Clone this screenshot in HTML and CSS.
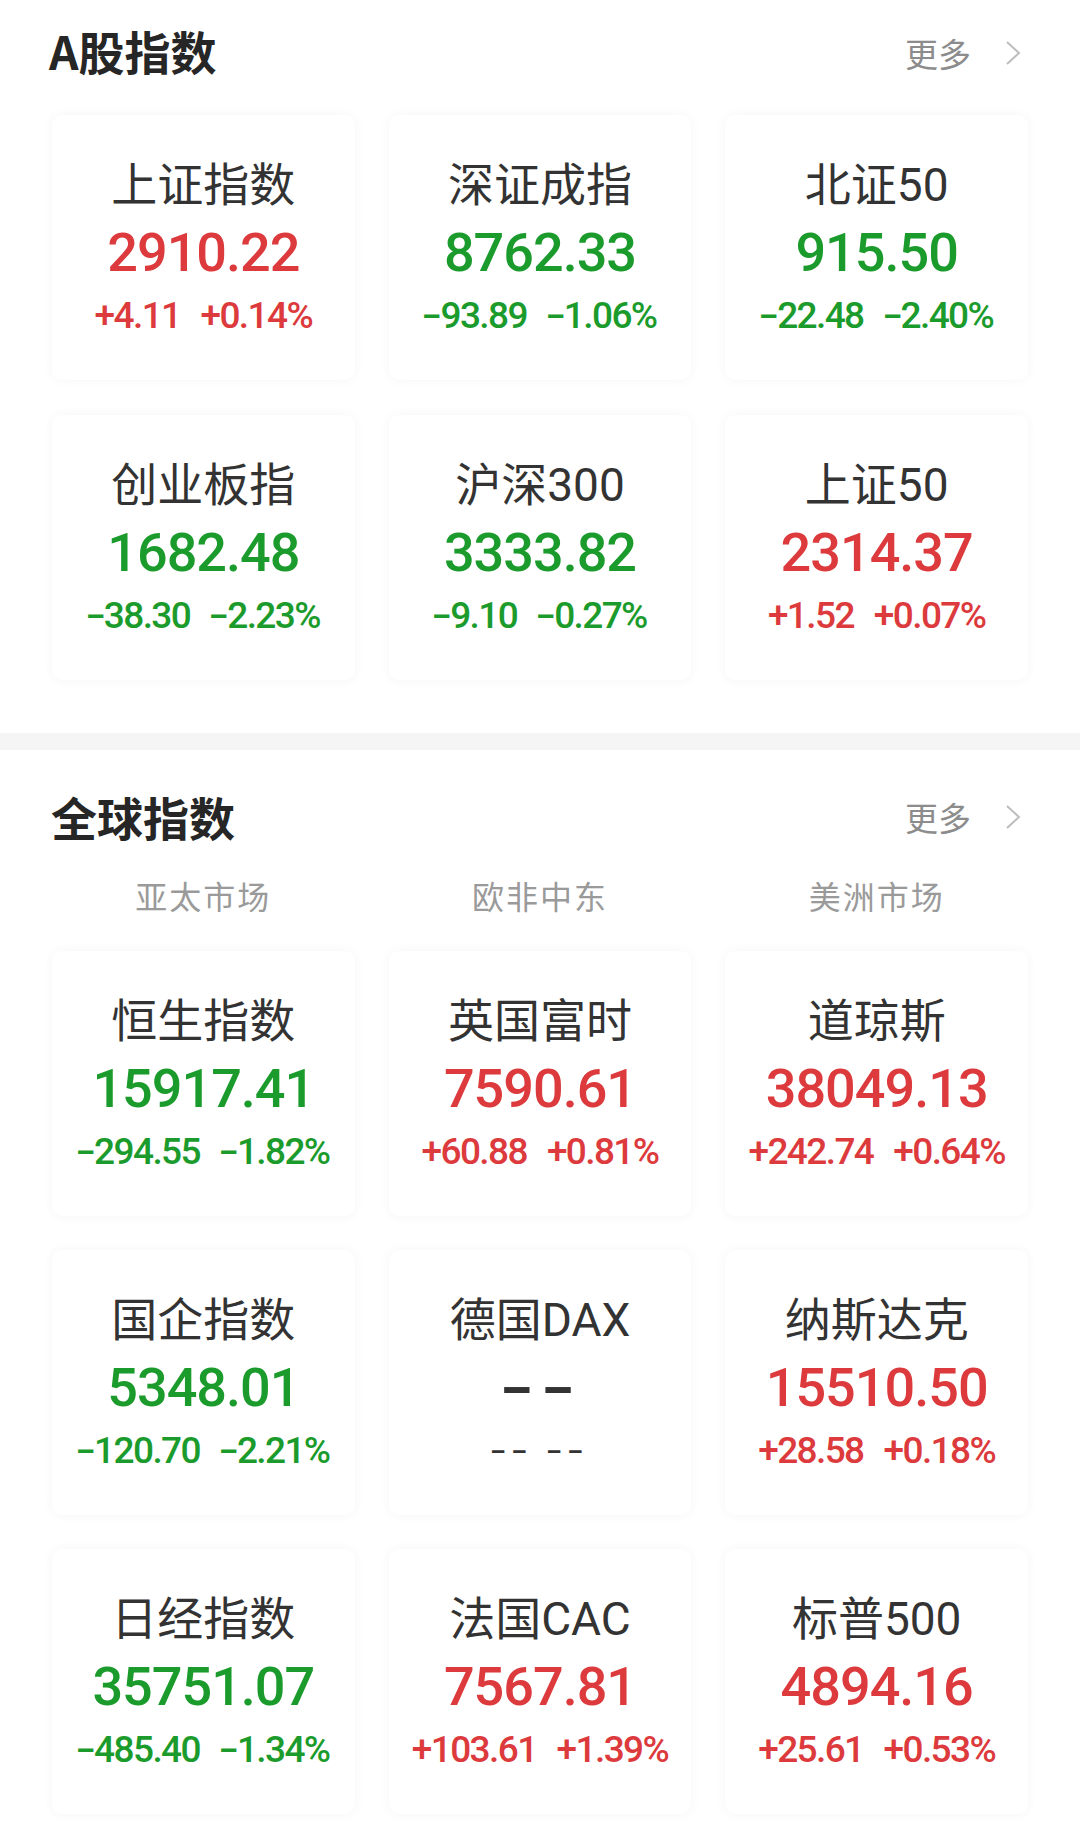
FILE: index.html
```html
<!DOCTYPE html>
<html lang="zh-CN">
<head>
<meta charset="utf-8">
<title>指数</title>
<link rel="stylesheet" href="styles.css">
</head>
<body>
<div class="page">
  <section class="sec sec-a">
    <div class="head">
      <h2 class="title">A股指数</h2>
      <div class="more"><span>更多</span><svg class="chev" viewBox="0 0 16 26" width="16" height="26"><polyline points="2,2 14,13 2,24" fill="none" stroke="#bdbdbd" stroke-width="2"/></svg></div>
    </div>
    <div class="grid grid-a">
      <div class="card"><div class="name">上证指数</div><div class="val up">2910.22</div><div class="chg up"><span>+4.11</span><span>+0.14%</span></div></div>
      <div class="card"><div class="name">深证成指</div><div class="val down">8762.33</div><div class="chg down"><span><i class="sign">-</i>93.89</span><span><i class="sign">-</i>1.06%</span></div></div>
      <div class="card"><div class="name">北证50</div><div class="val down">915.50</div><div class="chg down"><span><i class="sign">-</i>22.48</span><span><i class="sign">-</i>2.40%</span></div></div>
      <div class="card"><div class="name">创业板指</div><div class="val down">1682.48</div><div class="chg down"><span><i class="sign">-</i>38.30</span><span><i class="sign">-</i>2.23%</span></div></div>
      <div class="card"><div class="name">沪深300</div><div class="val down">3333.82</div><div class="chg down"><span><i class="sign">-</i>9.10</span><span><i class="sign">-</i>0.27%</span></div></div>
      <div class="card"><div class="name">上证50</div><div class="val up">2314.37</div><div class="chg up"><span>+1.52</span><span>+0.07%</span></div></div>
    </div>
  </section>
  <div class="band"></div>
  <section class="sec sec-g">
    <div class="head">
      <h2 class="title">全球指数</h2>
      <div class="more"><span>更多</span><svg class="chev" viewBox="0 0 16 26" width="16" height="26"><polyline points="2,2 14,13 2,24" fill="none" stroke="#bdbdbd" stroke-width="2"/></svg></div>
    </div>
    <div class="tabs">
      <span class="tab">亚太市场</span>
      <span class="tab">欧非中东</span>
      <span class="tab">美洲市场</span>
    </div>
    <div class="grid grid-g">
      <div class="card"><div class="name">恒生指数</div><div class="val down">15917.41</div><div class="chg down"><span><i class="sign">-</i>294.55</span><span><i class="sign">-</i>1.82%</span></div></div>
      <div class="card"><div class="name">英国富时</div><div class="val up">7590.61</div><div class="chg up"><span>+60.88</span><span>+0.81%</span></div></div>
      <div class="card"><div class="name">道琼斯</div><div class="val up">38049.13</div><div class="chg up"><span>+242.74</span><span>+0.64%</span></div></div>
      <div class="card"><div class="name">国企指数</div><div class="val down">5348.01</div><div class="chg down"><span><i class="sign">-</i>120.70</span><span><i class="sign">-</i>2.21%</span></div></div>
      <div class="card"><div class="name">德国DAX</div><div class="val flat"><span class="dash">--</span></div><div class="chg flat empty"><span>--</span><span>--</span></div></div>
      <div class="card"><div class="name">纳斯达克</div><div class="val up">15510.50</div><div class="chg up"><span>+28.58</span><span>+0.18%</span></div></div>
      <div class="card"><div class="name">日经指数</div><div class="val down">35751.07</div><div class="chg down"><span><i class="sign">-</i>485.40</span><span><i class="sign">-</i>1.34%</span></div></div>
      <div class="card"><div class="name">法国CAC</div><div class="val up">7567.81</div><div class="chg up"><span>+103.61</span><span>+1.39%</span></div></div>
      <div class="card"><div class="name">标普500</div><div class="val up">4894.16</div><div class="chg up"><span>+25.61</span><span>+0.53%</span></div></div>
    </div>
  </section>
</div>
</body>
</html>
```

FILE: styles.css
```css
* { box-sizing: border-box; }
html, body { margin: 0; padding: 0; background: #ffffff; }
body {
  width: 1080px;
  height: 1840px;
  overflow: hidden;
  font-family: Roboto, "Noto Sans CJK SC", sans-serif;
  color: #333333;
}
.page { width: 1080px; }
.sec { padding: 0 52px; }
.sec-g { padding-top: 14px; }
.head {
  height: 106px;
  display: flex;
  align-items: center;
  justify-content: space-between;
  padding-right: 7px;
}
.title {
  margin: -6px 0 0 -3px;
  font-family: "Noto Sans CJK SC", sans-serif;
  font-weight: 700;
  font-size: 46px;
  line-height: 56px;
  color: #262626;
}
.sec-g .title { margin-top: -3px; margin-left: -1px; }
.more {
  display: flex;
  align-items: center;
  gap: 34px;
  font-family: "Noto Sans CJK SC", sans-serif;
  font-size: 33px;
  line-height: 40px;
  color: #8c8c8c;
}
.chev { display: block; }
.grid {
  display: grid;
  grid-template-columns: repeat(3, 1fr);
  column-gap: 34px;
}
.grid-a { margin-top: 9px; row-gap: 35px; }
.grid-g { margin-top: 27px; row-gap: 34px; }
.band {
  height: 17px;
  margin-top: 53px;
  background: #f5f5f5;
}
.tabs {
  display: grid;
  grid-template-columns: repeat(3, 1fr);
  column-gap: 34px;
  height: 54px;
  align-items: center;
}
.tab {
  margin-top: -4px;
  text-align: center;
  font-family: "Noto Sans CJK SC", sans-serif;
  font-size: 32px;
  line-height: 54px;
  letter-spacing: 2px;
  color: #9a9a9a;
}
.card {
  height: 265px;
  background: #ffffff;
  border-radius: 10px;
  box-shadow: 0 0 12px rgba(0, 0, 0, 0.045);
  padding-top: 42px;
  text-align: center;
}
.name {
  font-family: Roboto, "Noto Sans CJK SC", sans-serif;
  font-size: 46px;
  line-height: 56px;
  color: #333333;
}
.val {
  font-family: Roboto, sans-serif;
  font-weight: 500;
  font-size: 54px;
  line-height: 80px;
  letter-spacing: -1px;
}
.chg {
  display: flex;
  justify-content: center;
  gap: 20px;
  margin-top: 4px;
  font-family: Roboto, sans-serif;
  font-weight: 500;
  font-size: 37px;
  line-height: 38px;
  letter-spacing: -1.6px;
}
.sign {
  display: inline-block;
  font-style: normal;
  transform: scaleX(1.6);
  margin: 0 4px 0 2px;
}
.up { color: #dc3a3c; }
.down { color: #1c9b2d; }
.flat { color: #333333; }
.dash {
  display: inline-block;
  font-weight: 700;
  letter-spacing: 3px;
  transform: scaleX(1.7);
}
.chg.empty { gap: 26px; font-weight: 400; letter-spacing: 5px; }
.chg.empty span { display: inline-block; transform: scaleX(1.4); }
```
